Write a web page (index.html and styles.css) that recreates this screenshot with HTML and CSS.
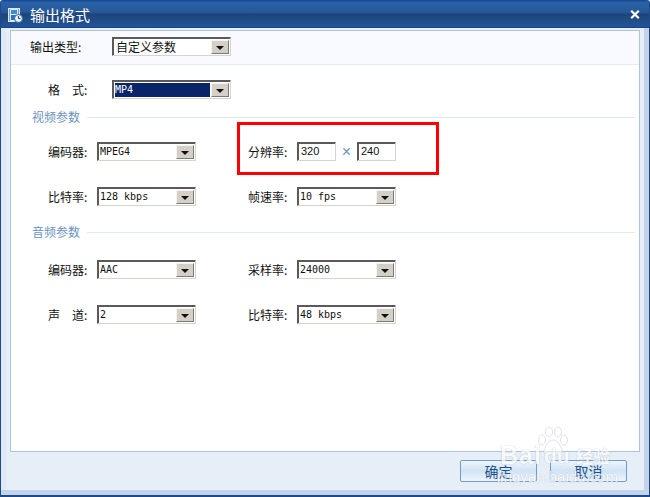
FILE: index.html
```html
<!DOCTYPE html>
<html lang="zh">
<head>
<meta charset="utf-8">
<title>输出格式</title>
<link rel="stylesheet" href="styles.css">
</head>
<body>
<div class="window">
  <header class="titlebar">
    <svg class="app-icon" width="15" height="15" viewBox="0 0 15 15">
      <rect x="0" y="0" width="12" height="14" fill="#dbe8f6"/>
      <rect x="3" y="2" width="6" height="4" fill="#3f8ad0"/>
      <rect x="3" y="7" width="6" height="5" fill="#2a74bb"/>
      <path d="M1 2h1M1 4h1M1 6h1M1 8h1M1 10h1M1 12h1M10 2h1M10 4h1M10 6h1" stroke="#1d4a85"/>
      <circle cx="10.5" cy="10.5" r="4" fill="#e8f0fa" stroke="#2a639f"/>
      <path d="M10.5 8v2.5h2" fill="none" stroke="#1d4a85"/>
    </svg>
    <span class="title">输出格式</span>
    <svg class="close" width="10" height="9" viewBox="0 0 10 9">
      <path d="M1.2 0.8L8.8 8.2M8.8 0.8L1.2 8.2" stroke="#fff" stroke-width="2.2" fill="none"/>
    </svg>
  </header>
  <main class="content">
    <section class="panel">
      <div class="type-row">
        <span class="label type-label">输出类型:</span>
        <div class="select wide"><span class="value cjk">自定义参数</span><span class="arrow"></span></div>
      </div>
      <div class="format-row">
        <span class="label format-label">格&emsp;式:</span>
        <div class="select wide"><span class="value selected">MP4</span><span class="arrow"></span></div>
      </div>

      <div class="group-head"><span>视频参数</span><i></i></div>
      <div class="fields">
        <span class="label">编码器:</span>
        <div class="select"><span class="value">MPEG4</span><span class="arrow"></span></div>
        <span class="label">分辨率:</span>
        <div class="size">
          <div class="input">320</div>
          <span class="times">×</span>
          <div class="input">240</div>
        </div>
        <span class="label">比特率:</span>
        <div class="select"><span class="value">128 kbps</span><span class="arrow"></span></div>
        <span class="label">帧速率:</span>
        <div class="select"><span class="value">10 fps</span><span class="arrow"></span></div>
      </div>

      <div class="group-head audio-head"><span>音频参数</span><i></i></div>
      <div class="fields audio">
        <span class="label">编码器:</span>
        <div class="select"><span class="value">AAC</span><span class="arrow"></span></div>
        <span class="label">采样率:</span>
        <div class="select"><span class="value">24000</span><span class="arrow"></span></div>
        <span class="label">声&emsp;道:</span>
        <div class="select"><span class="value">2</span><span class="arrow"></span></div>
        <span class="label">比特率:</span>
        <div class="select"><span class="value">48 kbps</span><span class="arrow"></span></div>
      </div>
      <div class="highlight"></div>
    </section>
    <footer class="actions">
      <button class="btn">确定</button>
      <button class="btn">取消</button>
    </footer>
  </main>
  <div class="watermark">
    <svg class="paw" width="32" height="30" viewBox="0 0 32 30">
      <g fill="#fff" stroke="#d2d6dd" stroke-width="1">
        <ellipse cx="5" cy="13" rx="3.5" ry="5"/>
        <ellipse cx="12" cy="5" rx="3.5" ry="4.5"/>
        <ellipse cx="21" cy="5" rx="3.5" ry="4.5"/>
        <ellipse cx="27" cy="13" rx="3.5" ry="5"/>
        <path d="M16 13c-4 0-8 6-9 10-1 5 5 6 9 4 4 2 10 1 9-4-1-4-5-10-9-10z"/>
      </g>
    </svg>
    <span class="wm-bai">Bai</span><span class="wm-du">du</span><span class="wm-jy">经验</span>
    <span class="wm-url">jingyan.baidu.com</span>
  </div>
</div>
</body>
</html>
```
FILE: styles.css
```css
* { box-sizing: border-box; }
html, body { margin: 0; padding: 0; }
body {
  width: 650px;
  height: 497px;
  overflow: hidden;
  font: 12px/18px "Noto Sans CJK SC", "Liberation Sans", sans-serif;
  color: #111;
  background: #fff;
}
.window {
  position: relative;
  width: 650px;
  height: 497px;
  display: flex;
  flex-direction: column;
  overflow: hidden;
  background: #1c4a8a;
  border-radius: 3px 3px 0 0;
  padding: 1px 1px 2px 1px;
}
.titlebar {
  height: 27px;
  flex: none;
  display: flex;
  align-items: center;
  padding: 0 9px 0 7px;
  border-top: 1px solid #1f55ad;
  border-bottom: 1px solid #14458f;
  background: linear-gradient(#2a62a6 0, #27599a 40%, #1d4478 50%, #20497f 60%, #21549b 100%);
  color: #fff;
}
.app-icon { flex: none; margin-top: 1px; }
.title { margin-left: 7px; font-size: 15px; flex: 1; }
.close { flex: none; }
.content {
  flex: 1;
  min-height: 0;
  display: flex;
  flex-direction: column;
  padding: 2px 9px 0 9px;
  background: #e6eef8;
  border-bottom: 5px solid #c5d3e9;
  border-right: 5px solid #c5d3e9;
  box-shadow: inset 5px 0 0 #dfe8f5;
}
.panel {
  position: relative;
  width: 630px;
  height: 422px;
  flex: none;
  border: 1px solid #b0c4de;
  background: #fff;
}
.type-row {
  height: 34px;
  display: flex;
  align-items: center;
  padding: 0 0 2px 19px;
  background: #f8faff;
  border-bottom: 1px solid #e3ebf6;
}
.type-label { width: 82px; }
.format-row {
  display: flex;
  align-items: center;
  height: 19px;
  margin-top: 15px;
  padding-left: 37px;
}
.format-label { width: 64px; }
.label { flex: none; white-space: nowrap; }
.select {
  display: flex;
  width: 99px;
  height: 19px;
  padding: 2px 1px 1px 2px;
  border: 1px solid;
  border-color: #5a5a5a #d6d3ca #d6d3ca #5a5a5a;
  box-shadow: inset 1px 1px 0 #5a5a5a;
  background: #fff;
  align-items: stretch;
}
.select.wide { width: 119px; }
.value {
  flex: 1;
  min-width: 0;
  font: 10px/14px "DejaVu Sans Mono", "Liberation Mono", monospace;
  color: #111;
  white-space: nowrap;
}
.value.cjk { font: 12px/14px "Noto Sans CJK SC", sans-serif; padding-left: 1px; }
.value.selected { background: #0a246a; color: #fff; margin-right: 1px; }
.arrow {
  position: relative;
  flex: none;
  width: 18px;
  background: #d4d0c8;
  border: 1px solid;
  border-color: #f4f3ef #7c7a74 #7c7a74 #f4f3ef;
}
.arrow::after {
  content: "";
  position: absolute;
  left: 4px;
  top: 5px;
  border: 4px solid transparent;
  border-top: 4px solid #111;
  border-bottom: 0;
}
.group-head {
  display: flex;
  align-items: center;
  height: 18px;
  margin: 9px 4px 0 21px;
  color: #6c93c0;
}
.audio-head { margin-top: 17px; }
.group-head i {
  flex: 1;
  height: 1px;
  margin-left: 7px;
  background: #e1e8f2;
}
.fields {
  display: grid;
  grid-template-columns: 49px 151px 49px 99px;
  grid-auto-rows: 19px;
  row-gap: 26px;
  align-items: center;
  margin: 16px 0 0 37px;
}
.audio { margin-top: 19px; }
.size { display: flex; align-items: center; }
.input {
  width: 39px;
  height: 19px;
  padding-left: 3px;
  border: 1px solid;
  border-color: #5a5a5a #d6d3ca #d6d3ca #5a5a5a;
  box-shadow: inset 1px 1px 0 #5a5a5a;
  font: 11px/17px "Liberation Sans", sans-serif;
  background: #fff;
}
.times {
  width: 21px;
  text-align: center;
  color: #6c93c0;
  font: 16px/18px "Liberation Sans", sans-serif;
}
.highlight {
  position: absolute;
  left: 226px;
  top: 91px;
  width: 202px;
  height: 53px;
  border: 3px solid #f00;
}
.actions {
  display: flex;
  justify-content: flex-end;
  gap: 13px;
  padding: 8px 13px 0 0;
  width: 630px;
}
.btn {
  width: 77px;
  height: 22px;
  padding: 0;
  border: 1px solid #6f9bd0;
  border-radius: 2px;
  background: linear-gradient(#eef5fc 0, #cfe4f5 50%, #eef5fc 100%);
  color: #1d4f8c;
  font: 14px/18px "Noto Sans CJK SC", sans-serif;
}
.watermark {
  position: absolute;
  left: 497px;
  top: 427px;
  width: 118px;
  height: 58px;
  color: #fff;
  opacity: .7;
  pointer-events: none;
}
.paw { position: absolute; left: 40px; top: 0; }
.wm-bai, .wm-du, .wm-jy, .wm-url {
  position: absolute;
  white-space: nowrap;
  color: #fff;
  text-shadow: 0 0 1px #b4bac4, 0 0 1px #b4bac4;
}
.wm-bai { left: 3px; top: 14px; font: bold 25px/28px "Liberation Sans", sans-serif; letter-spacing: 1px; }
.wm-du { left: 47px; top: 16px; font: bold 21px/26px "Liberation Sans", sans-serif; }
.wm-jy { left: 79px; top: 18px; font: bold 17px/22px "Noto Sans CJK SC", sans-serif; }
.wm-url { left: 0; top: 41px; font: 15px/18px "Liberation Sans", sans-serif; }
```
